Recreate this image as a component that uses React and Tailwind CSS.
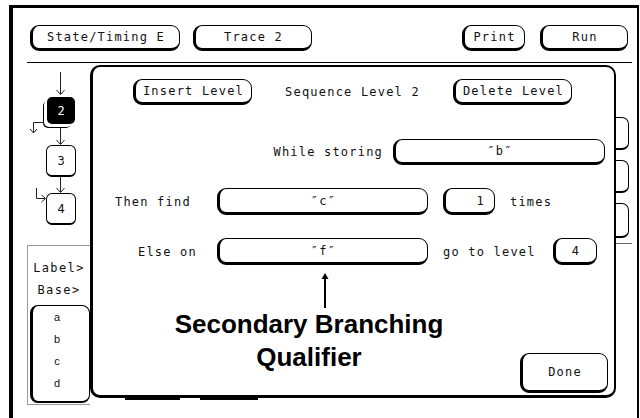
import React from "react";

function Btn({ className = "", children }) {
  return (
    <div
      className={`flex items-center justify-center rounded-[9px] border border-l-[3px] border-b-[3px] border-black bg-white text-[12px] tracking-[1.2px] text-[#111] ${className}`}
    >
      {children}
    </div>
  );
}

function LevelFlow() {
  return (
    <div className="relative h-[182px] w-[63px]">
      <svg
        className="absolute inset-0"
        width="63"
        height="182"
        viewBox="0 0 63 182"
        fill="none"
        stroke="#222"
        strokeWidth="1"
      >
        <path d="M33.5 9v22M29.5 27l4 4.5 4-4.5" />
        <path d="M33.5 64v17M29.5 77l4 4.5 4-4.5" />
        <path d="M33.5 114v15M29.5 125l4 4.5 4-4.5" />
        <path d="M16 59.5H6.5v10M3 66l3.5 4 3.5-4" />
        <path d="M9.5 125v10.5H18M14.5 132l4 3.5-4 3.5" />
      </svg>
      <div className="absolute left-[20px] top-[34px] flex h-[27px] w-[28px] items-center justify-center rounded-[5px] bg-black text-[12px] text-white shadow-[-3px_3px_0_0_white,-4px_4px_0_0_black]">
        2
      </div>
      <div className="absolute left-[19px] top-[82px] flex h-[32px] w-[30px] items-center justify-center rounded-[6px] border border-b-[2px] border-black bg-white text-[12px]">
        3
      </div>
      <div className="absolute left-[19px] top-[130px] flex h-[32px] w-[30px] items-center justify-center rounded-[6px] border border-b-[2px] border-black bg-white text-[12px]">
        4
      </div>
    </div>
  );
}

export default function App() {
  return (
    <div className="h-[418px] w-[640px] overflow-hidden bg-white font-['DejaVu_Sans_Mono',monospace] text-[#111]">
      <div className="ml-[9px] mt-[5px] h-[413px] w-[630px] border-l-[4px] border-r-2 border-t-[3px] border-black">
        {/* top soft keys */}
        <div className="mt-[17px] flex h-[26px]">
          <Btn className="ml-[17px] w-[150px]">State/Timing E</Btn>
          <Btn className="ml-[13px] w-[119px]">Trace 2</Btn>
          <Btn className="ml-[150px] w-[63px]">Print</Btn>
          <Btn className="ml-[15px] w-[88px]">Run</Btn>
        </div>
        <div className="ml-[14px] mt-[11px] h-px w-[605px] bg-black" />

        <div className="flex">
          {/* left: sequence levels + labels */}
          <div className="ml-[14px] w-[63px]">
            <LevelFlow />
            <div className="flex h-[160px] flex-col items-center border-b border-l border-t border-[#999] text-[12px] tracking-[1.4px]">
              <div className="mt-[14px] leading-[16px]">Label&gt;</div>
              <div className="mt-[6px] leading-[16px]">Base&gt;</div>
              <div className="ml-[2px] mt-[7px] flex h-[98px] w-[60px] flex-col self-start rounded-[8px] border border-b-2 border-l-[3px] border-black pr-[8px] text-center font-['Liberation_Sans',sans-serif] text-[11px] tracking-normal">
                <div className="leading-[22px]">a</div>
                <div className="leading-[22px]">b</div>
                <div className="leading-[22px]">c</div>
                <div className="leading-[22px]">d</div>
              </div>
            </div>
          </div>

          {/* sequence level dialog */}
          <div className="w-[526px]">
            <div className="mt-[2px] flex h-[333px] flex-col rounded-[10px] border-b-[3px] border-l-[3px] border-r-2 border-t-2 border-black bg-white text-[12px] tracking-[1.2px]">
              <div className="mt-[12px] flex h-[26px] items-center">
                <Btn className="ml-[40px] h-[26px] w-[119px]">Insert Level</Btn>
                <div className="w-[201px] text-center">Sequence Level 2</div>
                <Btn className="h-[26px] w-[119px]">Delete Level</Btn>
              </div>

              <div className="mt-[34px] flex h-[26px] items-center">
                <div className="w-[300px] pr-[10px] text-right">While storing</div>
                <Btn className="h-[26px] w-[212px]">{"\u2033b\u2033"}</Btn>
              </div>

              <div className="mt-[23px] flex h-[27px] items-center">
                <div className="w-[124px] pl-[22px]">Then find</div>
                <Btn className="h-[27px] w-[211px]">{"\u2033c\u2033"}</Btn>
                <Btn className="ml-[15px] h-[27px] w-[52px] !justify-end pr-[9px]">1</Btn>
                <div className="ml-[15px]">times</div>
              </div>

              <div className="mt-[23px] flex h-[27px] items-center">
                <div className="w-[124px] pl-[45px]">Else on</div>
                <Btn className="h-[27px] w-[211px]">{"\u2033f\u2033"}</Btn>
                <div className="ml-[15px] w-[110px]">go to level</div>
                <Btn className="h-[27px] w-[44px]">4</Btn>
              </div>

              <div className="flex h-[130px]">
                <div className="ml-[80px] flex w-[272px] flex-col">
                  <svg
                    className="ml-[148px] mt-[8px]"
                    width="8"
                    height="35"
                    viewBox="0 0 8 35"
                  >
                    <path d="M4 4v31" stroke="black" strokeWidth="2" />
                    <path d="M4 0l3.5 6h-7z" fill="black" />
                  </svg>
                  <div className="text-center font-['Liberation_Sans',Arial,sans-serif] text-[26px] font-bold leading-[33px] tracking-normal text-black">
                    Secondary Branching
                    <br />
                    Qualifier
                  </div>
                </div>
                <Btn className="mb-[2px] ml-[75px] h-[40px] w-[88px] self-end">Done</Btn>
              </div>
            </div>
            <div className="flex">
              <div className="ml-[35px] h-[2px] w-[55px] bg-black" />
              <div className="ml-[20px] h-[2px] w-[58px] bg-black" />
            </div>
          </div>

          {/* keys hidden behind the dialog */}
          <div className="flex w-[16px] flex-col">
            <div className="mt-[54px] h-[33px] w-[13px] rounded-r-[7px] border border-b-2 border-l-0 border-black" />
            <div className="mt-[10px] h-[33px] w-[13px] rounded-r-[7px] border border-b-2 border-l-0 border-black" />
            <div className="mt-[10px] h-[35px] w-[13px] rounded-r-[7px] border border-b-2 border-l-0 border-black" />
            <div className="mt-[5px] h-px w-[16px] bg-[#666]" />
          </div>
        </div>
      </div>
    </div>
  );
}
